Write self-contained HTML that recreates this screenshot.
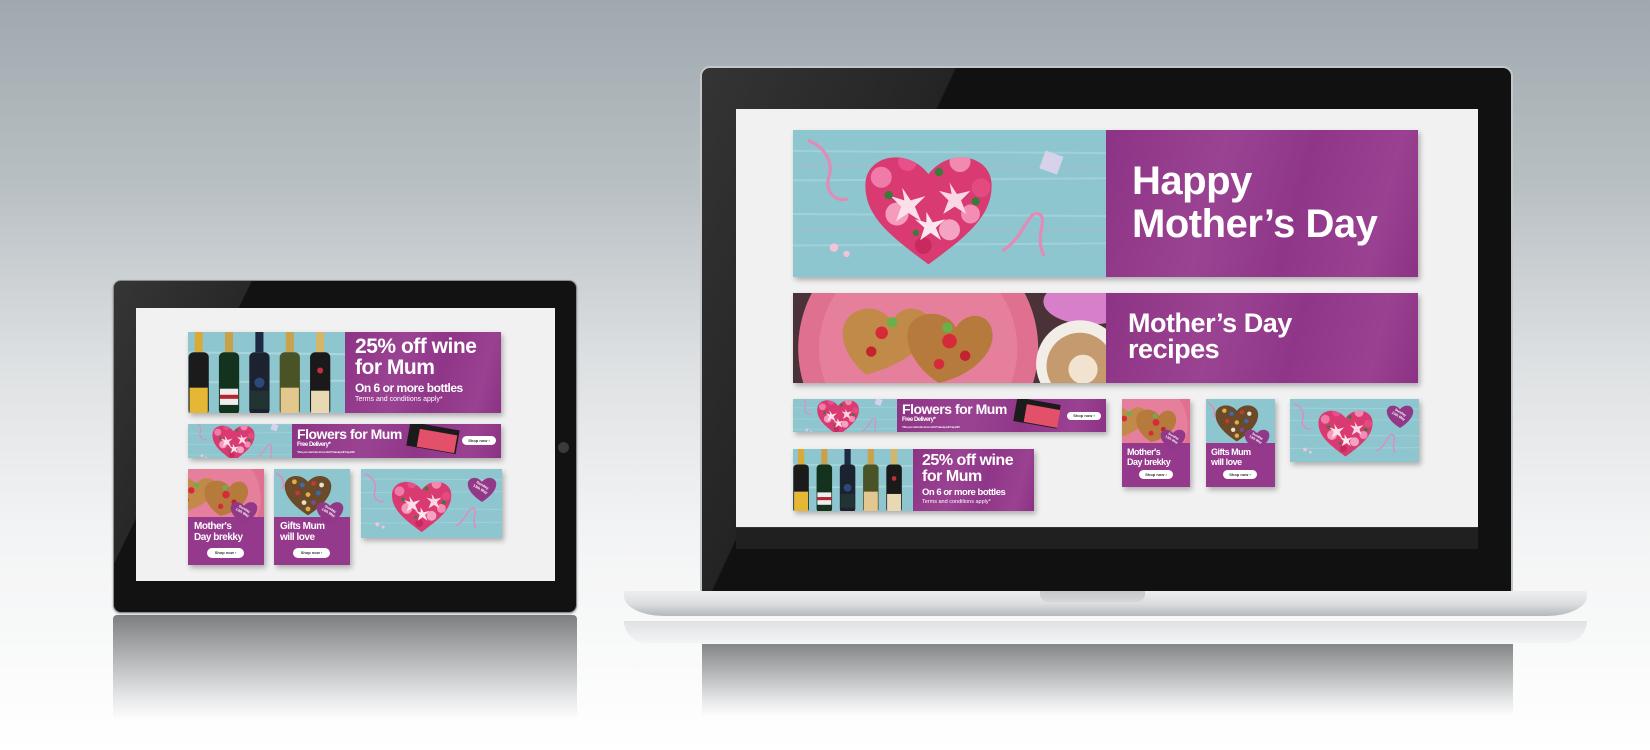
<!DOCTYPE html>
<html><head><meta charset="utf-8"><style>
*{margin:0;padding:0;box-sizing:border-box}
body{width:1650px;height:750px;overflow:hidden;position:relative;background:linear-gradient(180deg,#9fa9ae 0%,#b9c0c4 25%,#dde0e2 48%,#f2f3f4 70%,#fff 100%);font-family:"Liberation Sans",sans-serif}
.a{position:absolute}
.b{position:absolute;overflow:hidden;box-shadow:2px 3px 5px rgba(0,0,0,.28)}
.ph{position:absolute;left:0;top:0;height:100%}
.pu{position:absolute;top:0;bottom:0;right:0;background:linear-gradient(105deg,#8d3385 0%,#9b4393 35%,#8f3688 60%,#9a4192 85%,#8c3284 100%);color:#fff;font-weight:bold;letter-spacing:-.03em}
.t{position:absolute;white-space:nowrap}
.btn{position:absolute;background:#fff;border-radius:10px;color:#333;font-weight:bold;text-align:center;letter-spacing:0}
</style></head><body>
<svg width="0" height="0" style="position:absolute">
<defs>
<clipPath id="hc"><path d="M130 128C95 102 68 82 70 50C72 24 110 16 130 42C150 16 188 24 190 50C192 82 165 102 130 128Z"/></clipPath>
<symbol id="flw" viewBox="0 0 300 140" preserveAspectRatio="xMidYMid slice">
<rect width="300" height="140" fill="#8ec6cf"/>
<g stroke="#a9d6dc" stroke-width="2" opacity=".7"><line x1="0" y1="20" x2="300" y2="22"/><line x1="0" y1="48" x2="300" y2="46"/><line x1="0" y1="80" x2="300" y2="82"/><line x1="0" y1="110" x2="300" y2="108"/></g>
<g stroke="#c8a9c4" stroke-width="1" opacity=".5"><line x1="0" y1="34" x2="300" y2="35"/><line x1="0" y1="95" x2="300" y2="95"/></g>
<path d="M130 128C95 102 68 82 70 50C72 24 110 16 130 42C150 16 188 24 190 50C192 82 165 102 130 128Z" fill="#d93a72"/>
<g clip-path="url(#hc)">
<circle cx="85" cy="45" r="10" fill="#f07aa8"/><circle cx="110" cy="30" r="9" fill="#e8508a"/><circle cx="160" cy="30" r="10" fill="#f28ab0"/><circle cx="180" cy="55" r="9" fill="#e24a80"/><circle cx="100" cy="80" r="11" fill="#f59bbd"/><circle cx="150" cy="95" r="10" fill="#f4a4c2"/><circle cx="125" cy="110" r="8" fill="#c82a60"/><circle cx="170" cy="80" r="9" fill="#f48db4"/>
<path d="M105 55l8 12 14-4-10 10 6 14-12-8-12 8 5-14-10-10 13 4z" fill="#fbe0ea"/>
<path d="M150 50l7 11 13-3-9 9 5 13-11-7-11 7 5-13-9-9 12 3z" fill="#fbd6e4"/>
<path d="M128 78l6 10 12-3-9 8 5 12-10-7-10 7 4-12-9-8 11 3z" fill="#fde6ee"/>
<circle cx="92" cy="62" r="4" fill="#3d7a3a"/><circle cx="140" cy="40" r="4" fill="#3d7a3a"/><circle cx="175" cy="68" r="4" fill="#3d7a3a"/><circle cx="118" cy="98" r="3" fill="#3d7a3a"/></g>
<path d="M15 10c15 5 25 20 20 35s10 25 18 20" stroke="#e28ab8" stroke-width="3" fill="none"/>
<path d="M200 115c20-10 25-40 35-35s-5 20 5 40" stroke="#e28ab8" stroke-width="3" fill="none"/>
<rect x="238" y="22" width="18" height="18" fill="#d7d2ea" transform="rotate(20 247 31)"/>
<circle cx="40" cy="112" r="4" fill="#f3c4d8"/><circle cx="52" cy="118" r="3" fill="#f3c4d8"/>
</symbol>
<symbol id="wine" viewBox="0 0 170 80" preserveAspectRatio="xMidYMid slice">
<rect width="170" height="80" fill="#8ec6cf"/>
<g stroke="#a9d6dc" stroke-width="2"><line x1="0" y1="20" x2="170" y2="22"/><line x1="0" y1="50" x2="170" y2="48"/></g>
<g>
<rect x="14" y="0" width="8" height="20" fill="#d9aa38"/><rect x="8" y="20" width="20" height="62" rx="5" fill="#1b1b1b"/><rect x="9" y="55" width="18" height="25" fill="#e6b734"/>
<rect x="44" y="0" width="8" height="20" fill="#c7a24a"/><rect x="38" y="20" width="20" height="62" rx="5" fill="#14331f"/><rect x="39" y="56" width="18" height="16" fill="#eee"/><rect x="39" y="62" width="18" height="4" fill="#b8232d"/>
<rect x="74" y="0" width="8" height="20" fill="#1e2a44"/><rect x="68" y="20" width="20" height="62" rx="5" fill="#1d2230"/><circle cx="78" cy="50" r="5" fill="#2a4a7a"/><rect x="69" y="58" width="18" height="18" fill="#233"/>
<rect x="104" y="0" width="8" height="20" fill="#c9a24c"/><rect x="98" y="20" width="20" height="62" rx="5" fill="#4a5326"/><rect x="99" y="55" width="18" height="25" fill="#e2c88e"/>
<rect x="134" y="0" width="8" height="20" fill="#d4b56a"/><rect x="128" y="20" width="20" height="62" rx="5" fill="#1a1a1a"/><circle cx="138" cy="38" r="3" fill="#c0303a"/><rect x="129" y="58" width="18" height="22" fill="#e8d9b4"/>
</g></symbol>
<symbol id="pan" viewBox="0 0 300 90" preserveAspectRatio="xMidYMid slice">
<rect width="300" height="90" fill="#4a3238"/>
<ellipse cx="285" cy="10" rx="45" ry="22" fill="#d77fc8"/>
<circle cx="120" cy="55" r="115" fill="#e0708f"/><circle cx="120" cy="55" r="95" fill="#e57f9c"/>
<path d="M70 80C45 60 40 30 60 20C75 12 90 20 95 30C100 15 120 12 130 25C140 45 110 70 70 80Z" fill="#c28a48"/>
<path d="M140 88C110 70 100 35 120 25C135 17 152 25 156 35C165 20 185 20 190 35C197 55 175 80 140 88Z" fill="#b57a3c"/>
<circle cx="85" cy="40" r="6" fill="#d62a3a"/><circle cx="75" cy="58" r="5" fill="#c4222f"/><circle cx="150" cy="48" r="7" fill="#d62a3a"/><circle cx="165" cy="62" r="5" fill="#c4222f"/><circle cx="140" cy="70" r="5" fill="#d62a3a"/>
<circle cx="95" cy="30" r="5" fill="#6ab04a"/><circle cx="148" cy="35" r="5" fill="#6ab04a"/>
<circle cx="275" cy="70" r="42" fill="#f2ede6"/><circle cx="275" cy="72" r="32" fill="#c49a6e"/><circle cx="278" cy="75" r="14" fill="#f1e3d0"/>
</symbol>
<symbol id="choc" viewBox="0 0 100 60" preserveAspectRatio="xMidYMid slice">
<rect width="100" height="60" fill="#8ec6cf"/>
<path d="M45 58C25 45 15 32 16 20C17 8 35 4 45 16C55 4 73 8 74 20C75 32 65 45 45 58Z" fill="#6b4a2a"/>
<g><circle cx="28" cy="16" r="3" fill="#d9b04a"/><circle cx="38" cy="20" r="3" fill="#3a6ab0"/><circle cx="52" cy="18" r="3" fill="#c03a3a"/><circle cx="62" cy="20" r="3" fill="#e8e0c8"/><circle cx="32" cy="30" r="3" fill="#c03a3a"/><circle cx="45" cy="32" r="3" fill="#d9b04a"/><circle cx="58" cy="30" r="3" fill="#3a6ab0"/><circle cx="40" cy="42" r="3" fill="#e8e0c8"/><circle cx="52" cy="42" r="3" fill="#7a4a9a"/><circle cx="45" cy="50" r="3" fill="#d9b04a"/></g>
<path d="M5 5c8 4 12 12 8 20" stroke="#e28ab8" stroke-width="2" fill="none"/>
</symbol>
<symbol id="badge" viewBox="0 0 40 36"><path d="M20 36C8 28 1 20 1 12C1 4 12 0 20 9C28 0 39 4 39 12C39 20 32 28 20 36Z" fill="#923888"/><text x="20" y="15" font-size="5" fill="#fff" text-anchor="middle" font-family="Liberation Sans" font-weight="bold" transform="rotate(30 20 15)">Sunday</text><text x="20" y="21" font-size="5" fill="#fff" text-anchor="middle" font-family="Liberation Sans" font-weight="bold" transform="rotate(30 20 15)">13th May</text></symbol>
</defs></svg>

<!-- ============ TABLET ============ -->
<div class="a" style="left:113px;top:615px;width:464px;height:105px;background:linear-gradient(180deg,#7e7f80 0%,#b3b4b5 40%,#e8e9ea 80%,rgba(255,255,255,0) 100%);border-radius:4px"></div>
<div class="a" style="left:113px;top:280px;width:464px;height:333px;background:#121212;border-radius:8px;border:1px solid #8a8d90;box-shadow:0 1px 2px rgba(0,0,0,.3)"></div>
<div class="a" style="left:114px;top:281px;width:462px;height:331px;border-radius:8px;background:linear-gradient(116deg,rgba(120,120,120,.35) 0%,rgba(90,90,90,.3) 22%,rgba(0,0,0,0) 22.2%)"></div>
<div class="a" style="left:558px;top:442px;width:11px;height:11px;border-radius:50%;background:#3a3a3a"></div>
<div class="a" style="left:136px;top:308px;width:419px;height:273px;background:#f1f1f1"></div>

<div class="b" style="left:188px;top:332px;width:313px;height:81px">
 <svg class="ph" style="width:157px" viewBox="0 0 170 80" preserveAspectRatio="xMidYMid slice"><use href="#wine"/></svg>
 <div class="pu" style="left:157px">
  <div class="t" style="left:10px;top:4px;font-size:21px;line-height:21px">25% off wine<br>for Mum</div>
  <div class="t" style="left:10px;top:49px;font-size:12px">On 6 or more bottles</div>
  <div class="t" style="left:10px;top:64px;font-size:7px;font-weight:normal;letter-spacing:0">Terms and conditions apply*</div>
 </div>
</div>
<div class="b" style="left:188px;top:424px;width:313px;height:34px">
 <svg class="ph" style="width:105px" viewBox="0 0 300 140" preserveAspectRatio="xMidYMid slice"><use href="#flw"/></svg>
 <div class="pu" style="left:104px">
  <div class="t" style="left:5px;top:2px;font-size:14px">Flowers for Mum</div>
  <div class="t" style="left:5px;top:18px;font-size:6px">Free Delivery*</div>
  <div class="t" style="left:5px;top:26px;font-size:3px;font-weight:normal">*Place your order before 12 noon AEST Saturday 12th May 2018</div>
  <div class="a" style="left:116px;top:2px;width:50px;height:24px;background:#1b1b1b;transform:rotate(10deg)"></div>
  <div class="a" style="left:126px;top:8px;width:38px;height:18px;background:#e2506a;transform:rotate(10deg)"></div>
  <div class="btn" style="left:170px;top:12px;width:34px;height:9px;font-size:4px;line-height:9px">Shop now ›</div>
 </div>
</div>
<div class="b" style="left:188px;top:469px;width:76px;height:96px;background:#94398b">
 <svg class="ph" style="width:76px;height:48px" viewBox="0 0 300 90" preserveAspectRatio="xMidYMid slice"><use href="#pan"/></svg>
 <svg class="a" style="left:42px;top:30px;width:28px;height:26px"><use href="#badge"/></svg>
 <div class="pu" style="left:0;top:48px;background:none">
  <div class="t" style="left:6px;top:4px;font-size:10px;line-height:11px">Mother's<br>Day brekky</div>
  <div class="btn" style="left:19px;top:31px;width:37px;height:10px;font-size:4px;line-height:10px">Shop now ›</div>
 </div>
</div>
<div class="b" style="left:274px;top:469px;width:76px;height:96px;background:#94398b">
 <svg class="ph" style="width:76px;height:48px" viewBox="0 0 100 60" preserveAspectRatio="xMidYMid slice"><use href="#choc"/></svg>
 <svg class="a" style="left:42px;top:30px;width:28px;height:26px"><use href="#badge"/></svg>
 <div class="pu" style="left:0;top:48px;background:none">
  <div class="t" style="left:6px;top:4px;font-size:10px;line-height:11px">Gifts Mum<br>will love</div>
  <div class="btn" style="left:19px;top:31px;width:37px;height:10px;font-size:4px;line-height:10px">Shop now ›</div>
 </div>
</div>
<div class="b" style="left:361px;top:469px;width:141px;height:69px">
 <svg class="ph" style="width:141px" viewBox="0 0 300 140" preserveAspectRatio="xMidYMid slice"><use href="#flw"/></svg>
 <svg class="a" style="left:106px;top:6px;width:30px;height:27px"><use href="#badge"/></svg>
</div>

<!-- ============ LAPTOP ============ -->
<div class="a" style="left:624px;top:621px;width:963px;height:22px;background:linear-gradient(180deg,rgba(220,222,224,.9),rgba(240,241,242,.6));border-radius:0 0 30px 30px"></div>
<div class="a" style="left:702px;top:644px;width:811px;height:72px;background:linear-gradient(180deg,#858688 0%,#b5b6b7 40%,#e8e9ea 80%,rgba(255,255,255,0) 100%)"></div>
<div class="a" style="left:700px;top:66px;width:813px;height:527px;background:#111;border-radius:10px 10px 0 0;border:2px solid #c3c7ca;border-bottom:none"></div>
<div class="a" style="left:702px;top:68px;width:809px;height:523px;border-radius:9px 9px 0 0;background:linear-gradient(115deg,rgba(110,110,110,.38) 0%,rgba(80,80,80,.3) 24%,rgba(0,0,0,0) 24.2%)"></div>
<div class="a" style="left:736px;top:527px;width:742px;height:22px;background:#202020;border-top:1px solid #333"></div>
<div class="a" style="left:624px;top:591px;width:963px;height:25px;background:linear-gradient(180deg,#eceef0 0%,#dcdee0 50%,#b5b8bb 100%);border-radius:2px 2px 40px 40px/2px 2px 20px 20px"></div>
<div class="a" style="left:1040px;top:591px;width:105px;height:11px;background:linear-gradient(180deg,#c5c7ca,#d5d7d9);border-radius:0 0 8px 8px"></div>
<div class="a" style="left:736px;top:109px;width:742px;height:418px;background:#f1f1f1"></div>

<div class="b" style="left:793px;top:130px;width:625px;height:147px">
 <svg class="ph" style="width:313px" viewBox="0 0 300 140" preserveAspectRatio="xMidYMid slice"><use href="#flw"/></svg>
 <div class="pu" style="left:313px">
  <div class="t" style="left:26px;top:30px;font-size:40px;line-height:43px">Happy<br>Mother’s Day</div>
 </div>
</div>
<div class="b" style="left:793px;top:293px;width:625px;height:90px">
 <svg class="ph" style="width:313px" viewBox="0 0 300 90" preserveAspectRatio="xMidYMid slice"><use href="#pan"/></svg>
 <div class="pu" style="left:313px">
  <div class="t" style="left:22px;top:17px;font-size:27px;line-height:26px">Mother’s Day<br>recipes</div>
 </div>
</div>
<div class="b" style="left:793px;top:399px;width:313px;height:33px">
 <svg class="ph" style="width:104px" viewBox="0 0 300 140" preserveAspectRatio="xMidYMid slice"><use href="#flw"/></svg>
 <div class="pu" style="left:104px">
  <div class="t" style="left:5px;top:2px;font-size:14px">Flowers for Mum</div>
  <div class="t" style="left:5px;top:18px;font-size:6px">Free Delivery*</div>
  <div class="t" style="left:5px;top:26px;font-size:3px;font-weight:normal">*Place your order before 12 noon AEST Saturday 12th May 2018</div>
  <div class="a" style="left:118px;top:2px;width:44px;height:24px;background:#1b1b1b;transform:rotate(10deg)"></div>
  <div class="a" style="left:128px;top:8px;width:34px;height:18px;background:#e2506a;transform:rotate(10deg)"></div>
  <div class="btn" style="left:170px;top:13px;width:34px;height:8px;font-size:4px;line-height:8px">Shop now ›</div>
 </div>
</div>
<div class="b" style="left:793px;top:449px;width:241px;height:62px">
 <svg class="ph" style="width:120px" viewBox="0 0 170 80" preserveAspectRatio="xMidYMid slice"><use href="#wine"/></svg>
 <div class="pu" style="left:120px">
  <div class="t" style="left:9px;top:4px;font-size:16px;line-height:16px">25% off wine<br>for Mum</div>
  <div class="t" style="left:9px;top:38px;font-size:9.5px">On 6 or more bottles</div>
  <div class="t" style="left:9px;top:50px;font-size:5.5px;font-weight:normal;letter-spacing:0">Terms and conditions apply*</div>
 </div>
</div>
<div class="b" style="left:1122px;top:399px;width:68px;height:88px;background:#94398b">
 <svg class="ph" style="width:68px;height:44px" viewBox="0 0 300 90" preserveAspectRatio="xMidYMid slice"><use href="#pan"/></svg>
 <svg class="a" style="left:38px;top:28px;width:26px;height:24px"><use href="#badge"/></svg>
 <div class="pu" style="left:0;top:44px;background:none">
  <div class="t" style="left:5px;top:4px;font-size:9px;line-height:10px">Mother's<br>Day brekky</div>
  <div class="btn" style="left:17px;top:27px;width:34px;height:9px;font-size:4px;line-height:9px">Shop now ›</div>
 </div>
</div>
<div class="b" style="left:1206px;top:399px;width:69px;height:88px;background:#94398b">
 <svg class="ph" style="width:69px;height:44px" viewBox="0 0 100 60" preserveAspectRatio="xMidYMid slice"><use href="#choc"/></svg>
 <svg class="a" style="left:38px;top:28px;width:26px;height:24px"><use href="#badge"/></svg>
 <div class="pu" style="left:0;top:44px;background:none">
  <div class="t" style="left:5px;top:4px;font-size:9px;line-height:10px">Gifts Mum<br>will love</div>
  <div class="btn" style="left:17px;top:27px;width:34px;height:9px;font-size:4px;line-height:9px">Shop now ›</div>
 </div>
</div>
<div class="b" style="left:1290px;top:399px;width:129px;height:63px">
 <svg class="ph" style="width:129px" viewBox="0 0 300 140" preserveAspectRatio="xMidYMid slice"><use href="#flw"/></svg>
 <svg class="a" style="left:96px;top:4px;width:28px;height:25px"><use href="#badge"/></svg>
</div>
</body></html>
